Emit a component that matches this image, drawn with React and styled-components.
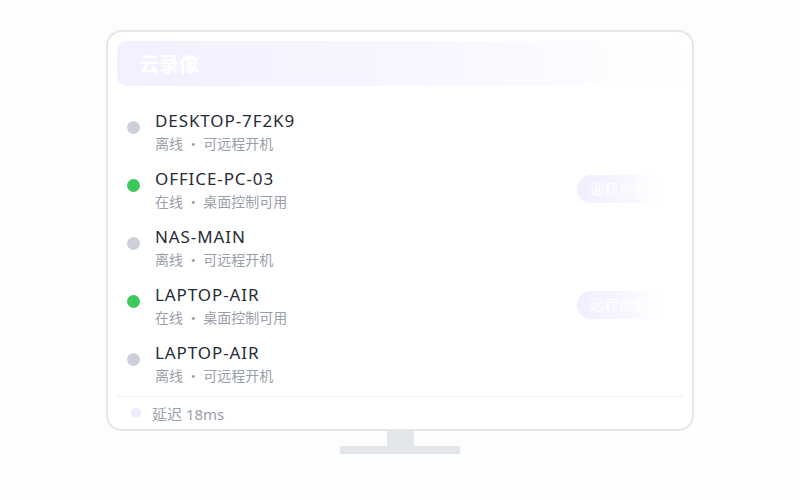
import React from "react";
import styled, { createGlobalStyle } from "styled-components";

const Global = createGlobalStyle`
  html, body { margin: 0; padding: 0; background: #fdfdfd; }
  body { font-family: "Noto Sans", "Noto Sans CJK SC", sans-serif; }
  * { box-sizing: border-box; }
`;

const Page = styled.div`
  width: 800px;
  height: 500px;
  display: flex;
  flex-direction: column;
  align-items: center;
  padding-top: 30px;
`;

const Monitor = styled.div`
  width: 588px;
  height: 401px;
  border: 2px solid #e4e6ea;
  border-radius: 16px;
  background: #ffffff;
  padding: 9px 9px 0;
  display: flex;
  flex-direction: column;
`;

const Header = styled.div`
  height: 45px;
  flex-shrink: 0;
  border-radius: 10px;
  background: linear-gradient(90deg, #f3f0ff 0%, #f8f6ff 55%, #ffffff 100%);
  display: flex;
  align-items: center;
  padding-left: 22px;
  color: #ffffff;
  font-size: 20px;
  font-weight: 700;
  font-family: "Noto Sans CJK SC", sans-serif;
`;

const List = styled.div`
  margin-top: 16px;
  padding: 0 10px;
  display: flex;
  flex-direction: column;
`;

const Row = styled.div`
  height: 58px;
  display: flex;
  align-items: center;
`;

const Dot = styled.span`
  width: 13px;
  height: 13px;
  border-radius: 50%;
  background: ${(p) => (p.$online ? "#3cc85a" : "#cbd0d8")};
  align-self: flex-start;
  margin-top: 19px;
  flex-shrink: 0;
`;

const Info = styled.div`
  margin-left: 15px;
  display: flex;
  flex-direction: column;
  flex: 1;
`;

const Name = styled.div`
  font-size: 17px;
  line-height: 22px;
  color: #262b35;
  letter-spacing: 0.9px;
  margin-top: 1px;
`;

const Sub = styled.div`
  font-size: 14px;
  line-height: 20px;
  color: #9aa0aa;
  margin-top: 1px;
  font-family: "Noto Sans CJK SC", sans-serif;
`;

const RemoteButton = styled.button`
  width: 96px;
  height: 28px;
  border: none;
  border-radius: 14px;
  background: linear-gradient(90deg, #f1eeff 0%, #f6f4ff 45%, #ffffff 85%);
  color: #ffffff;
  font-size: 15px;
  text-align: left;
  padding: 0 0 0 12px;
`;

const Footer = styled.div`
  margin-top: 4px;
  border-top: 1px solid #eef0f3;
  flex: 1;
  display: flex;
  align-items: center;
  padding-left: 14px;
  gap: 11px;
  font-size: 15px;
  color: #9aa0aa;
`;

const SmallDot = styled.span`
  width: 10px;
  height: 10px;
  border-radius: 50%;
  background: #eeebfe;
`;

const Neck = styled.div`
  width: 27px;
  height: 15px;
  background: #e2e5e9;
`;

const Base = styled.div`
  width: 120px;
  height: 8px;
  background: #e2e5e9;
  border-radius: 1px;
`;

const devices = [
  { name: "DESKTOP-7F2K9", online: false },
  { name: "OFFICE-PC-03", online: true },
  { name: "NAS-MAIN", online: false },
  { name: "LAPTOP-AIR", online: true },
  { name: "LAPTOP-AIR", online: false },
];

export default function App() {
  return (
    <>
      <Global />
      <Page>
        <Monitor>
          <Header>云录像</Header>
          <List>
            {devices.map((d, i) => (
              <Row key={i}>
                <Dot $online={d.online} />
                <Info>
                  <Name>{d.name}</Name>
                  <Sub>{d.online ? "在线 · 桌面控制可用" : "离线 · 可远程开机"}</Sub>
                </Info>
                {d.online && <RemoteButton>远程控制</RemoteButton>}
              </Row>
            ))}
          </List>
          <Footer>
            <SmallDot />
            <span>延迟 18ms</span>
          </Footer>
        </Monitor>
        <Neck />
        <Base />
      </Page>
    </>
  );
}
